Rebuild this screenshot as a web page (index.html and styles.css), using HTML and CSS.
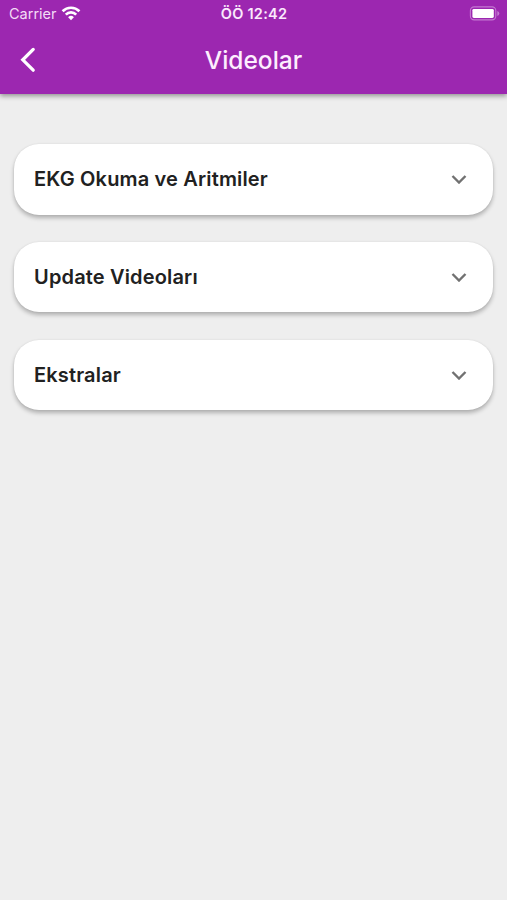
FILE: index.html
```html
<!DOCTYPE html>
<html lang="tr">
<head>
    <meta charset="UTF-8">
    <meta name="viewport" content="width=device-width, initial-scale=1.0">
    <title>Videolar</title>
    <link rel="stylesheet" href="styles.css">
</head>
<body>

<header class="header">
    <div class="status-bar">
        <div class="carrier">
            <span class="carrier-name">Carrier</span>
            <svg class="wifi" width="20" height="15" viewBox="0 0 20 15" fill="none" stroke="#fff" stroke-width="2.7">
                <path d="M1.6 5.2a12 12 0 0 1 16.8 0"/>
                <path d="M4.8 8.6a7.4 7.4 0 0 1 10.4 0"/>
                <path d="M10 14.2L7.1 11.3a4.1 4.1 0 0 1 5.8 0z" fill="#fff" stroke="none"/>
            </svg>
        </div>
        <span class="time">ÖÖ 12:42</span>
        <svg class="battery" width="31" height="15" viewBox="0 0 31 15">
            <rect x="1.4" y="0.9" width="25.4" height="13" rx="3.8" fill="none" stroke="#c479d1" stroke-width="1.1"/>
            <rect x="3.4" y="2.9" width="21.4" height="9" rx="1.4" fill="#fff"/>
            <path d="M28.3 5v5q2-.8 2-2.5T28.3 5z" fill="#c479d1"/>
        </svg>
    </div>
    <div class="nav-bar">
        <button class="back" aria-label="Geri">
            <svg width="16" height="26" viewBox="0 0 16 26" fill="none" stroke="#fff" stroke-width="3.3" stroke-linecap="round">
                <path d="M13.2 2.4L2.8 12.8l10.4 10.4"/>
            </svg>
        </button>
        <h1 class="title">Videolar</h1>
    </div>
</header>

<main class="list">
    <div class="card">
        <span class="name">EKG Okuma ve Aritmiler</span>
        <svg class="arrow" width="16" height="10" viewBox="0 0 16 10"><path d="M1.5 2L8 8.5 14.5 2"/></svg>
    </div>
    <div class="card">
        <span class="name">Update Videoları</span>
        <svg class="arrow" width="16" height="10" viewBox="0 0 16 10"><path d="M1.5 2L8 8.5 14.5 2"/></svg>
    </div>
    <div class="card">
        <span class="name">Ekstralar</span>
        <svg class="arrow" width="16" height="10" viewBox="0 0 16 10"><path d="M1.5 2L8 8.5 14.5 2"/></svg>
    </div>
</main>

</body>
</html>
```
FILE: styles.css
```css
* { box-sizing: border-box; }
body { margin: 0; min-height: 100vh; background-color: #eeeeee; font-family: Inter, Roboto, sans-serif; }

.header { height: 94px; background-color: #9c27b0; color: #fff; box-shadow: 0 2px 5px rgba(0, 0, 0, 0.4); }
.status-bar { display: grid; grid-template-columns: 1fr auto 1fr; align-items: center; height: 27px; padding: 0 7px 0 9px; }
.carrier { display: flex; align-items: center; gap: 4px; color: #f3dcf6; }
.carrier-name { font-size: 14.5px; line-height: 20px; }
.wifi { margin-top: -1px; }
.time { margin-right: 1px; font-size: 14.5px; font-weight: 600; line-height: 20px; letter-spacing: 0.25px; color: #fbe9fd; }
.battery { justify-self: end; }

.nav-bar { display: grid; grid-template-columns: 60px 1fr 60px; align-items: center; height: 66px; }
.back { display: flex; padding: 0 0 0 20px; border: none; background: none; cursor: pointer; }
.title { margin: 0; padding-bottom: 1px; font-size: 24.5px; font-weight: 500; line-height: 30px; text-align: center; color: #fdeefe; }

.list { display: flex; flex-direction: column; gap: 27.3px; padding: 50px 14px; }
.card { display: flex; align-items: center; justify-content: space-between; height: 70.5px; padding: 0 26px 0 20px; border-radius: 25px; background-color: #fff; box-shadow: 0 3px 4px rgba(0, 0, 0, 0.26), 0 0 2px rgba(0, 0, 0, 0.08); }
.name { font-size: 20px; font-weight: 600; line-height: 26px; letter-spacing: 0.16px; color: #212121; }
.arrow { fill: none; stroke: #717171; stroke-width: 2.4; }
```
